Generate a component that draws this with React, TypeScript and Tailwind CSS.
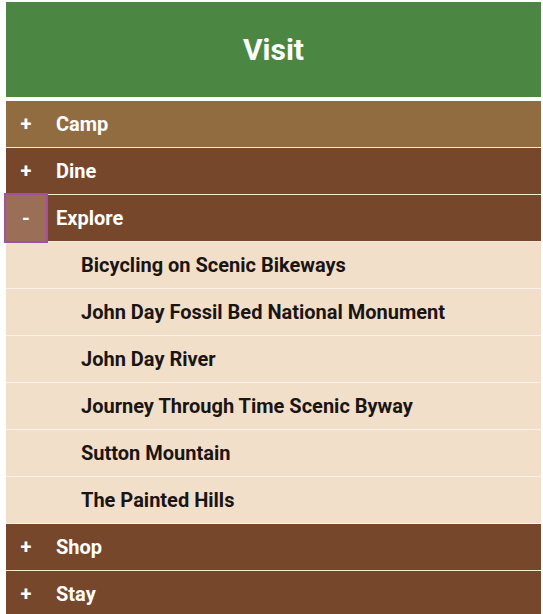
import React from "react";

const font = { fontFamily: "Roboto, 'Noto Sans', sans-serif" };

function Row({ sign, label, bg, active }: { sign: string; label: string; bg: string; active?: boolean }) {
  return (
    <div className={`flex h-[47px] items-center border-b border-[#f7ead8] ${bg}`}>
      <div
        className={`relative flex h-full w-[40px] items-center justify-center text-[20px] font-bold text-white ${
          active ? "bg-[#9b6e57] outline-2 outline-[#a34fa4]" : ""
        }`}
      >
        {sign}
      </div>
      <div className="pl-[10px] text-[20px] font-bold text-white">{label}</div>
    </div>
  );
}

function Item({ label }: { label: string }) {
  return (
    <div className="flex h-[47px] items-center border-b border-[#fbf3ea] bg-[#f2dfca] pl-[75px] text-[20px] font-bold text-[#1b1512]">
      {label}
    </div>
  );
}

export default function App() {
  return (
    <div className="h-[614px] overflow-hidden bg-white" style={font}>
      <div className="ml-[6px] mt-[2px] w-[535px]">
        <div className="flex h-[95px] items-center justify-center bg-[#4b8743] text-[30px] font-bold text-white">
          Visit
        </div>
        <div className="mt-[4px]">
          <Row sign="+" label="Camp" bg="bg-[#926c41]" />
          <Row sign="+" label="Dine" bg="bg-[#77472b]" />
          <Row sign="-" label="Explore" bg="bg-[#77472b]" active />
          <Item label="Bicycling on Scenic Bikeways" />
          <Item label="John Day Fossil Bed National Monument" />
          <Item label="John Day River" />
          <Item label="Journey Through Time Scenic Byway" />
          <Item label="Sutton Mountain" />
          <Item label="The Painted Hills" />
          <Row sign="+" label="Shop" bg="bg-[#77472b]" />
          <Row sign="+" label="Stay" bg="bg-[#77472b]" />
        </div>
      </div>
    </div>
  );
}
